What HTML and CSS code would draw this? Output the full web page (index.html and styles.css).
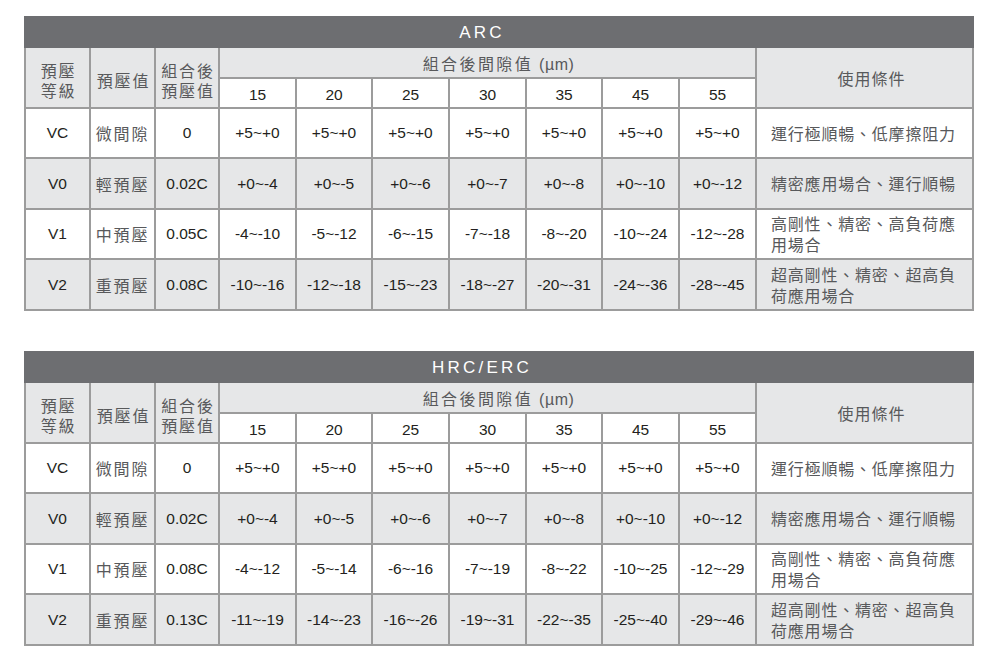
FILE: index.html
```html
<!DOCTYPE html>
<html lang="zh-Hant">
<head>
<meta charset="utf-8">
<title>ARC / HRC/ERC</title>
<link rel="stylesheet" href="styles.css">
</head>
<body>
<div class="page">
  <table class="spec">
    <colgroup>
      <col class="c-a"><col class="c-b"><col class="c-c">
      <col class="c-n"><col class="c-m"><col class="c-n"><col class="c-n"><col class="c-m"><col class="c-n"><col class="c-n">
      <col class="c-u">
    </colgroup>
    <tr class="r-title"><th colspan="11" class="title">ARC</th></tr>
    <tr class="r-h1">
      <th rowspan="2" class="hd cjk two">預壓<br>等級</th>
      <th rowspan="2" class="hd cjk">預壓值</th>
      <th rowspan="2" class="hd cjk two">組合後<br>預壓值</th>
      <th colspan="7" class="hd cjk wide">組合後間隙值 <span class="lat">(µm)</span></th>
      <th rowspan="2" class="hd cjk narrow">使用條件</th>
    </tr>
    <tr class="r-h2">
      <th class="num">15</th><th class="num">20</th><th class="num">25</th><th class="num">30</th><th class="num">35</th><th class="num">45</th><th class="num">55</th>
    </tr>
    <tr class="row white">
      <td class="num">VC</td><td class="cjk">微間隙</td><td class="num">0</td>
      <td class="num">+5~+0</td><td class="num">+5~+0</td><td class="num">+5~+0</td><td class="num">+5~+0</td><td class="num">+5~+0</td><td class="num">+5~+0</td><td class="num">+5~+0</td>
      <td class="cond">運行極順暢、低摩擦阻力</td>
    </tr>
    <tr class="row grey">
      <td class="num">V0</td><td class="cjk">輕預壓</td><td class="num">0.02C</td>
      <td class="num">+0~-4</td><td class="num">+0~-5</td><td class="num">+0~-6</td><td class="num">+0~-7</td><td class="num">+0~-8</td><td class="num">+0~-10</td><td class="num">+0~-12</td>
      <td class="cond">精密應用場合、運行順暢</td>
    </tr>
    <tr class="row white">
      <td class="num">V1</td><td class="cjk">中預壓</td><td class="num">0.05C</td>
      <td class="num">-4~-10</td><td class="num">-5~-12</td><td class="num">-6~-15</td><td class="num">-7~-18</td><td class="num">-8~-20</td><td class="num">-10~-24</td><td class="num">-12~-28</td>
      <td class="cond">高剛性、精密、高負荷應用場合</td>
    </tr>
    <tr class="row grey">
      <td class="num">V2</td><td class="cjk">重預壓</td><td class="num">0.08C</td>
      <td class="num">-10~-16</td><td class="num">-12~-18</td><td class="num">-15~-23</td><td class="num">-18~-27</td><td class="num">-20~-31</td><td class="num">-24~-36</td><td class="num">-28~-45</td>
      <td class="cond">超高剛性、精密、超高負荷應用場合</td>
    </tr>
  </table>

  <table class="spec">
    <colgroup>
      <col class="c-a"><col class="c-b"><col class="c-c">
      <col class="c-n"><col class="c-m"><col class="c-n"><col class="c-n"><col class="c-m"><col class="c-n"><col class="c-n">
      <col class="c-u">
    </colgroup>
    <tr class="r-title"><th colspan="11" class="title">HRC/ERC</th></tr>
    <tr class="r-h1">
      <th rowspan="2" class="hd cjk two">預壓<br>等級</th>
      <th rowspan="2" class="hd cjk">預壓值</th>
      <th rowspan="2" class="hd cjk two">組合後<br>預壓值</th>
      <th colspan="7" class="hd cjk wide">組合後間隙值 <span class="lat">(µm)</span></th>
      <th rowspan="2" class="hd cjk narrow">使用條件</th>
    </tr>
    <tr class="r-h2">
      <th class="num">15</th><th class="num">20</th><th class="num">25</th><th class="num">30</th><th class="num">35</th><th class="num">45</th><th class="num">55</th>
    </tr>
    <tr class="row white">
      <td class="num">VC</td><td class="cjk">微間隙</td><td class="num">0</td>
      <td class="num">+5~+0</td><td class="num">+5~+0</td><td class="num">+5~+0</td><td class="num">+5~+0</td><td class="num">+5~+0</td><td class="num">+5~+0</td><td class="num">+5~+0</td>
      <td class="cond">運行極順暢、低摩擦阻力</td>
    </tr>
    <tr class="row grey">
      <td class="num">V0</td><td class="cjk">輕預壓</td><td class="num">0.02C</td>
      <td class="num">+0~-4</td><td class="num">+0~-5</td><td class="num">+0~-6</td><td class="num">+0~-7</td><td class="num">+0~-8</td><td class="num">+0~-10</td><td class="num">+0~-12</td>
      <td class="cond">精密應用場合、運行順暢</td>
    </tr>
    <tr class="row white">
      <td class="num">V1</td><td class="cjk">中預壓</td><td class="num">0.08C</td>
      <td class="num">-4~-12</td><td class="num">-5~-14</td><td class="num">-6~-16</td><td class="num">-7~-19</td><td class="num">-8~-22</td><td class="num">-10~-25</td><td class="num">-12~-29</td>
      <td class="cond">高剛性、精密、高負荷應用場合</td>
    </tr>
    <tr class="row grey">
      <td class="num">V2</td><td class="cjk">重預壓</td><td class="num">0.13C</td>
      <td class="num">-11~-19</td><td class="num">-14~-23</td><td class="num">-16~-26</td><td class="num">-19~-31</td><td class="num">-22~-35</td><td class="num">-25~-40</td><td class="num">-29~-46</td>
      <td class="cond">超高剛性、精密、超高負荷應用場合</td>
    </tr>
  </table>
</div>
</body>
</html>
```

FILE: styles.css
```css
html, body {
  margin: 0;
  padding: 0;
  background: #ffffff;
}

body {
  font-family: "Liberation Sans", "Noto Sans CJK TC", sans-serif;
  color: #231f20;
}

.page {
  display: flex;
  flex-direction: column;
  gap: 40px;
  padding: 16px 0 0 24px;
}

.spec {
  border-collapse: collapse;
  table-layout: fixed;
  width: 948px;
}

.c-a { width: 65px; }
.c-b { width: 65px; }
.c-c { width: 64px; }
.c-n { width: 77px; }
.c-m { width: 76px; }
.c-u { width: 217px; }

.spec th,
.spec td {
  border: 2px solid #9c9c9c;
  padding: 0;
  text-align: center;
  vertical-align: middle;
  font-weight: normal;
}

.r-title { height: 30px; }
.r-h1 { height: 31px; }
.r-h2 { height: 30px; }
.row.white { height: 50px; }
.row.grey { height: 51px; }

.spec th.title {
  background: #6d6e71;
  border-color: #6d6e71;
  color: #ffffff;
  font-size: 17px;
  letter-spacing: 3.2px;
  padding: 1px 34px 0 0;
}

.hd {
  background: #e6e7e8;
}

.r-h2 th {
  background: #ffffff;
  padding-top: 4px;
}

.white td { background: #ffffff; }
.grey td { background: #e6e7e8; }

.num {
  font-family: "Liberation Sans", sans-serif;
  font-size: 15.5px;
  color: #231f20;
}

.cjk {
  font-family: "Noto Sans CJK TC", sans-serif;
  font-size: 16px;
  color: #58595b;
  letter-spacing: 1.8px;
  line-height: 20px;
}

.hd.cjk { padding-top: 5px; padding-left: 2px; }
.hd.wide { letter-spacing: 2.4px; padding: 3px 0 0 22px; }
.hd.narrow { letter-spacing: 1px; padding: 0 0 0 14px; }

.lat {
  font-family: "Liberation Sans", sans-serif;
  letter-spacing: 0.5px;
}

.spec td.cond {
  font-family: "Noto Sans CJK TC", sans-serif;
  font-size: 16px;
  color: #58595b;
  text-align: left;
  padding: 0 0 0 14px;
  line-height: 21px;
  letter-spacing: 0.8px;
}
```
